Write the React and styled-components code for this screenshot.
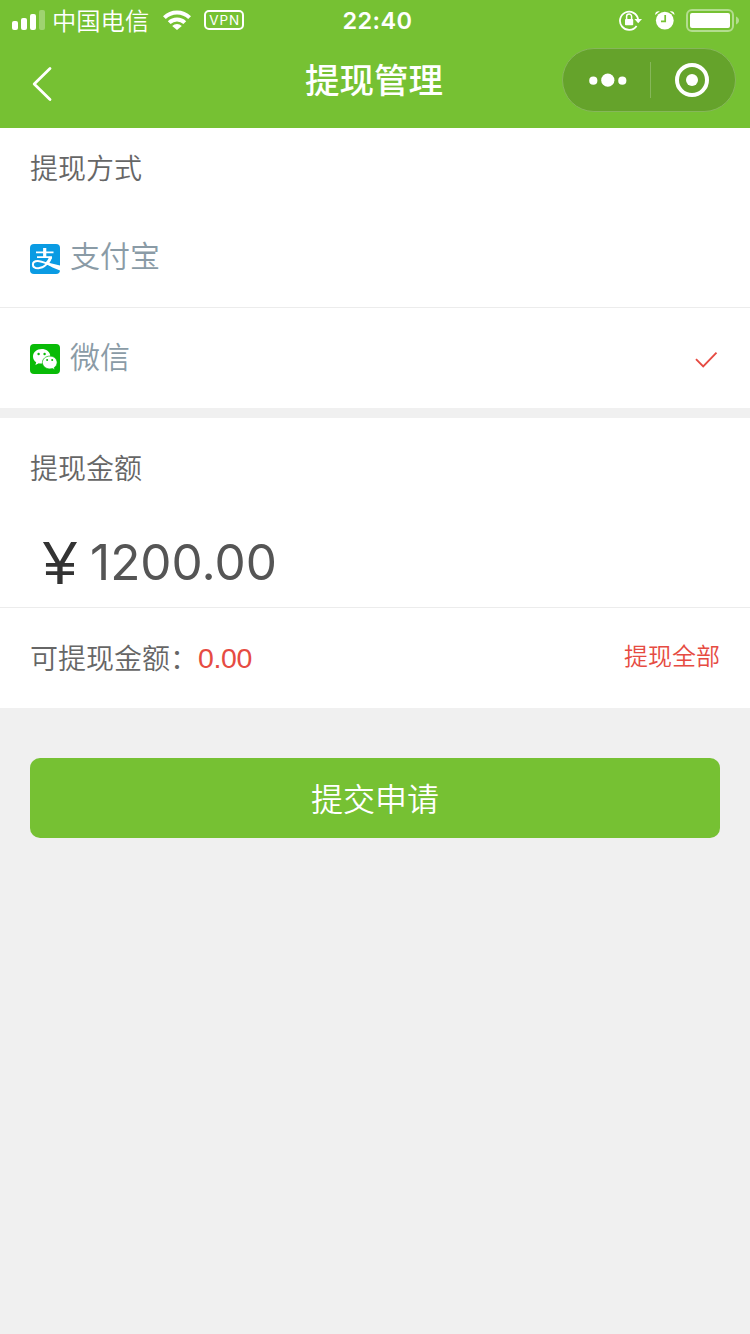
import React, { Component } from 'react';
import styled, { createGlobalStyle } from 'styled-components';

const GlobalStyle = createGlobalStyle`
  body {
    margin: 0;
    background: #f0f0f0;
    font-family: Inter, 'Noto Sans CJK SC', sans-serif;
  }
  svg {
    display: block;
  }
`;

const Page = styled.div`
  width: 750px;
  height: 1334px;
  overflow: hidden;
  background: #f0f0f0;
`;

const Header = styled.header`
  height: 128px;
  background: #76c133;
  color: #fff;
`;

const StatusBar = styled.div`
  display: grid;
  grid-template-columns: 1fr auto 1fr;
  align-items: center;
  height: 40px;
  padding: 0 10px 0 12px;
`;

const StatusGroup = styled.div`
  display: flex;
  align-items: center;
  justify-content: ${props => (props.$end ? 'flex-end' : 'flex-start')};
`;

const Carrier = styled.span`
  margin: 0 14px 0 6px;
  padding-top: 2px;
  font-size: 24.3px;
  font-weight: 350;
  line-height: 38px;
`;

const Vpn = styled.span`
  box-sizing: border-box;
  width: 40px;
  height: 20px;
  margin-left: 13px;
  padding-left: 1px;
  border: 2px solid #fff;
  border-radius: 5px;
  font-size: 13.5px;
  font-weight: 400;
  line-height: 17px;
  letter-spacing: 1px;
  text-align: center;
`;

const Clock = styled.time`
  padding: 2px 0 0 3px;
  font-size: 23.5px;
  font-weight: 600;
  line-height: 38px;
  letter-spacing: 0.4px;
`;

const NavBar = styled.div`
  display: grid;
  grid-template-columns: 1fr auto 1fr;
  align-items: start;
  height: 88px;
`;

const BackButton = styled.button`
  width: 60px;
  margin: 26px 0 0 30px;
  padding: 0;
  border: 0;
  background: none;
`;

const NavTitle = styled.h1`
  margin: 0 2px 0 0;
  font-size: 34.5px;
  font-weight: 500;
  line-height: 82px;
`;

const Capsule = styled.div`
  display: flex;
  align-items: center;
  justify-self: end;
  box-sizing: border-box;
  width: 174px;
  height: 64px;
  margin: 8px 14px 0 0;
  border: 1px solid #86b75a;
  border-radius: 32px;
  background: #65a32b;
`;

const CapsuleHalf = styled.div`
  display: flex;
  flex: 1;
  align-items: center;
  justify-content: center;
  box-sizing: border-box;
  height: 36px;
  padding-left: ${props => props.$shift || 0}px;
  & + & {
    padding-right: 1px;
    border-left: 1px solid #86b75a;
  }
`;

const Section = styled.section`
  margin-bottom: 10px;
  background: #fff;
`;

const SectionTitle = styled.h2`
  box-sizing: border-box;
  height: ${props => props.$height}px;
  margin: 0;
  padding: 1px 0 0 30px;
  color: #666;
  font-size: 28px;
  font-weight: 350;
  line-height: ${props => props.$height}px;
`;

const MethodRow = styled.div`
  display: flex;
  align-items: center;
  box-sizing: border-box;
  height: 100px;
  padding: 2px 30px 0;
  border-bottom: ${props => (props.$last ? '0' : '1px solid #ececec')};
`;

const MethodName = styled.span`
  flex: 1;
  padding-bottom: 5px;
  margin-left: 10px;
  color: #8a9ba6;
  font-size: 30px;
  font-weight: 350;
  line-height: 44px;
`;

const AmountRow = styled.div`
  display: flex;
  align-items: center;
  box-sizing: border-box;
  height: 90px;
  padding-left: 43px;
  border-bottom: 1px solid #ececec;
`;

const Yen = styled.span`
  width: 47px;
  padding-top: 1px;
  color: #333;
  font-family: 'Liberation Sans', sans-serif;
  font-size: 61px;
  line-height: 88px;
`;

const Amount = styled.span`
  padding-bottom: 2px;
  color: #555;
  font-size: 49.5px;
  line-height: 86px;
`;

const BalanceRow = styled.div`
  display: flex;
  align-items: center;
  justify-content: space-between;
  height: 100px;
  padding: 0 30px;
`;

const BalanceLabel = styled.div`
  display: flex;
  padding-top: 2px;
  color: #666;
  font-size: 28px;
  font-weight: 350;
  line-height: 100px;
`;

const Balance = styled.span`
  color: #e64b42;
  font-family: 'Liberation Sans', sans-serif;
  font-size: 28.5px;
  line-height: 98px;
  letter-spacing: -0.4px;
`;

const WithdrawAll = styled.a`
  padding-bottom: 7px;
  color: #e64b42;
  font-size: 24px;
  font-weight: 350;
`;

const SubmitButton = styled.button`
  display: block;
  width: 690px;
  height: 80px;
  margin: 50px 30px 0;
  padding: 0 0 2px;
  border: 0;
  border-radius: 10px;
  background: #76c133;
  color: #fff;
  font-family: inherit;
  font-size: 32px;
  font-weight: 350;
`;

const SignalIcon = () => (
  <svg width="34" height="20" viewBox="0 0 34 20" fill="#fff">
    <rect x="0" y="11" width="6" height="9" rx="2" />
    <rect x="9" y="8" width="6" height="12" rx="2" />
    <rect x="18" y="4" width="6" height="16" rx="2" />
    <rect x="27" y="0" width="6" height="20" rx="2" opacity=".3" />
  </svg>
);

const WifiIcon = () => (
  <svg width="28" height="20" viewBox="0 0 28 20">
    <g fill="none" stroke="#fff" strokeWidth="4">
      <path d="M1.4 7.6a18 18 0 0 1 25.2 0" />
      <path d="M6.2 12.6a11.2 11.2 0 0 1 15.6 0" />
    </g>
    <path d="M9.2 15.9a7 7 0 0 1 9.6 0L14 20z" fill="#fff" />
  </svg>
);

const LockIcon = () => (
  <svg width="24" height="22" viewBox="0 0 24 22">
    <path d="M17.6 17A9.1 9.1 0 1 1 19.1 10.5" fill="none" stroke="#fff" strokeWidth="1.8" />
    <path d="M15.4 10h7.6l-3.8 4.2z" fill="#fff" />
    <rect x="6" y="10" width="8.2" height="6.2" rx=".8" fill="#fff" />
    <path d="M7.6 10V7.6a2.5 2.5 0 0 1 5 0V10" fill="none" stroke="#fff" strokeWidth="1.5" />
  </svg>
);

const AlarmIcon = () => (
  <svg width="20" height="20" viewBox="0 0 20 20">
    <circle cx="9.8" cy="10.6" r="8.9" fill="#fff" />
    <path d="M10.2 5v6.4H6" fill="none" stroke="#76c133" strokeWidth="1.7" />
    <path d="M.2 5C0 2 1.4.8 4.9 1.2zM19.4 5c.2-3-1.2-4.2-4.7-3.8z" fill="#fff" />
  </svg>
);

const BatteryIcon = () => (
  <svg width="54" height="23" viewBox="0 0 54 23">
    <rect x="1" y="1" width="46" height="21" rx="5" fill="none" stroke="#fff" strokeOpacity=".45" strokeWidth="2" />
    <rect x="4" y="4" width="40" height="15" rx="2" fill="#fff" />
    <path d="M50 7.5c4 1.4 4 6.6 0 8z" fill="#fff" opacity=".45" />
  </svg>
);

const BackIcon = () => (
  <svg width="24" height="36" viewBox="0 0 24 36">
    <path d="M20 2.5L4.2 18 20 33.5" fill="none" stroke="#fff" strokeWidth="2.8" strokeLinecap="round" strokeLinejoin="round" />
  </svg>
);

const MoreIcon = () => (
  <svg width="38" height="14" viewBox="0 0 38 14" fill="#fff">
    <circle cx="4.3" cy="7.7" r="4.1" />
    <circle cx="18.8" cy="7.2" r="6.6" />
    <circle cx="33.3" cy="7.7" r="4.1" />
  </svg>
);

const CloseIcon = () => (
  <svg width="34" height="34" viewBox="0 0 34 34">
    <circle cx="17" cy="17" r="15" fill="none" stroke="#fff" strokeWidth="4" />
    <circle cx="17" cy="17" r="6" fill="#fff" />
  </svg>
);

const AlipayIcon = () => (
  <svg width="30" height="30" viewBox="0 0 30 30">
    <rect width="30" height="30" rx="4" fill="#0a9be3" />
    <g fill="none" stroke="#fff">
      <path d="M6 8.3h17.5M7 13.1h15" strokeWidth="1.7" />
      <path d="M14.7 4v9" strokeWidth="3.2" />
      <path
        d="M21 13.1C19 18.4 14.2 24.2 8.3 24.2c-3.5 0-5.4-1.6-5.4-3.8 0-2.1 1.9-3.5 4.7-3.5 4.8 0 10.4 3.5 22.4 7.2"
        strokeWidth="2"
      />
      <path d="M20.8 13.1c-1 2.6-2.6 5-4.5 6.9" strokeWidth="3" />
    </g>
    <path d="M15.5 18.1L30 21.6v5c-5-2-10-4.4-14.5-6.9z" fill="#fff" />
  </svg>
);

const WechatIcon = () => (
  <svg width="30" height="30" viewBox="0 0 30 30">
    <rect width="30" height="30" rx="4" fill="#09bb07" />
    <path
      d="M11.7 5C6.7 5 3 8.3 3 12.4c0 2.4 1.2 4.4 3.2 5.8l-.8 2.9 3.4-1.9c1.1.3 2 .4 3.5.4l8-8.2C19.7 7.7 16.3 5 11.7 5z"
      fill="#fff"
    />
    <path
      d="M19.8 12.1c-4.1 0-7.4 2.8-7.4 6.4s3.3 6.4 7.4 6.4c.9 0 1.8-.2 2.6-.4l2.5 1.3-.7-2.2c1.8-1.2 2.9-3 2.9-5.1 0-3.6-3.2-6.4-7.3-6.4z"
      fill="#fff"
      stroke="#09bb07"
      strokeWidth=".7"
    />
    <g fill="#09bb07">
      <circle cx="8.6" cy="10" r="1.2" />
      <circle cx="14.6" cy="10" r="1.2" />
      <circle cx="17.1" cy="16" r="1" />
      <circle cx="22.2" cy="16" r="1" />
    </g>
  </svg>
);

const CheckIcon = () => (
  <svg width="28" height="18" viewBox="0 0 28 18">
    <path d="M4 9.2l7.2 7.2L24.5 2.6" fill="none" stroke="#e64b42" strokeWidth="1.9" />
  </svg>
);

const methods = [
  { id: 'alipay', name: '支付宝', icon: AlipayIcon },
  { id: 'wechat', name: '微信', icon: WechatIcon },
];

const IconGap = styled.span`
  margin-right: ${props => props.$size}px;
`;

class App extends Component {
  state = { method: 'wechat' };

  render() {
    const { method } = this.state;
    return (
      <Page>
        <GlobalStyle />
        <Header>
          <StatusBar>
            <StatusGroup>
              <SignalIcon />
              <Carrier>中国电信</Carrier>
              <WifiIcon />
              <Vpn>VPN</Vpn>
            </StatusGroup>
            <Clock>22:40</Clock>
            <StatusGroup $end>
              <LockIcon />
              <IconGap $size={12} />
              <AlarmIcon />
              <IconGap $size={11} />
              <BatteryIcon />
            </StatusGroup>
          </StatusBar>
          <NavBar>
            <BackButton>
              <BackIcon />
            </BackButton>
            <NavTitle>提现管理</NavTitle>
            <Capsule>
              <CapsuleHalf $shift={3}>
                <MoreIcon />
              </CapsuleHalf>
              <CapsuleHalf>
                <CloseIcon />
              </CapsuleHalf>
            </Capsule>
          </NavBar>
        </Header>

        <Section>
          <SectionTitle $height={80}>提现方式</SectionTitle>
          {methods.map(({ id, name, icon: Icon }, i) => (
            <MethodRow
              key={id}
              $last={i === methods.length - 1}
              onClick={() => this.setState({ method: id })}
            >
              <Icon />
              <MethodName>{name}</MethodName>
              {method === id && <CheckIcon />}
            </MethodRow>
          ))}
        </Section>

        <Section>
          <SectionTitle $height={100}>提现金额</SectionTitle>
          <AmountRow>
            <Yen>¥</Yen>
            <Amount>1200.00</Amount>
          </AmountRow>
          <BalanceRow>
            <BalanceLabel>
              可提现金额：<Balance>0.00</Balance>
            </BalanceLabel>
            <WithdrawAll>提现全部</WithdrawAll>
          </BalanceRow>
        </Section>

        <SubmitButton>提交申请</SubmitButton>
      </Page>
    );
  }
}

export default App;
